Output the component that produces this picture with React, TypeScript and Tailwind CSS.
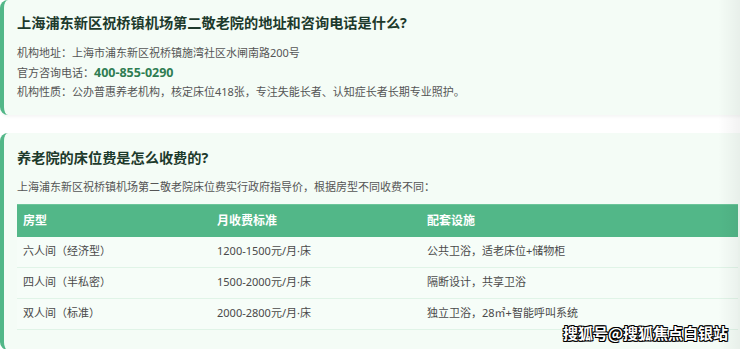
const rows = [
  { type: "六人间（经济型）", price: "1200-1500元/月·床", info: "公共卫浴，适老床位+储物柜" },
  { type: "四人间（半私密）", price: "1500-2000元/月·床", info: "隔断设计，共享卫浴" },
  { type: "双人间（标准）", price: "2000-2800元/月·床", info: "独立卫浴，28㎡+智能呼叫系统" },
];

const App = () => {
  return (
    <div className="relative w-[740px] h-[349px] overflow-hidden bg-white font-['Noto_Sans','Noto_Sans_CJK_SC',sans-serif]">
      <div className="flex flex-col gap-[18px] mr-[-20px]">
        <section className="rounded-lg border-l-4 border-[#52b788] bg-[#f4fcf6] pl-[13px] pr-[22px] pt-[13px] pb-[13px] shadow-[0_2px_3px_rgba(0,0,0,0.04)]">
          <h2 className="text-[14.2px] leading-[20px] font-bold text-[#1d3a2c] mb-[10px]">
            上海浦东新区祝桥镇机场第二敬老院的地址和咨询电话是什么?
          </h2>
          <div className="flex flex-col text-[11px] leading-[19.5px] text-[#555]">
            <p>机构地址：上海市浦东新区祝桥镇施湾社区水闸南路200号</p>
            <p className="h-[19.5px]">
              官方咨询电话：<span className="text-[12.5px] leading-[19.5px] font-bold text-[#2f7d52]">400-855-0290</span>
            </p>
            <p>机构性质：公办普惠养老机构，核定床位418张，专注失能长者、认知症长者长期专业照护。</p>
          </div>
        </section>

        <section className="rounded-lg border-l-4 border-[#52b788] bg-[#f4fcf6] pl-[13px] pr-[22px] pt-[15px] pb-[20px]">
          <h2 className="text-[14.2px] leading-[20px] font-bold text-[#1d3a2c] mb-[9px]">
            养老院的床位费是怎么收费的?
          </h2>
          <p className="text-[11px] leading-[20px] text-[#555] mb-[7px]">
            上海浦东新区祝桥镇机场第二敬老院床位费实行政府指导价，根据房型不同收费不同：
          </p>
          <div className="w-[721px] text-[11px]">
            <div className="grid grid-cols-[194px_210px_1fr] h-[33px] items-center bg-[#52b788] text-white font-bold text-[12px] border-t border-[#6cc59a]">
              <div className="px-[6px]">房型</div>
              <div className="px-[6px]">月收费标准</div>
              <div className="px-[6px]">配套设施</div>
            </div>
            {rows.map((r) => (
              <div
                key={r.type}
                className="grid grid-cols-[194px_210px_1fr] h-[31px] items-center border-b border-[#e0f4e7] bg-[#f6fdf8] text-[#4a4a4a]"
              >
                <div className="px-[6px]">{r.type}</div>
                <div className="px-[6px]">{r.price}</div>
                <div className="px-[6px]">{r.info}</div>
              </div>
            ))}
          </div>
        </section>
      </div>

      <div className="absolute top-0 right-0 h-full w-[22px] bg-gradient-to-r from-transparent to-black/[0.05] pointer-events-none" />

      <div className="absolute left-[563px] top-[323px] text-[15px] leading-[20px] font-bold text-white font-['Noto_Sans_CJK_SC',sans-serif] [text-shadow:1px_1px_0_#000,-1px_-1px_0_#000,1px_-1px_0_#000,-1px_1px_0_#000,0_1px_0_#000,0_-1px_0_#000]">
        搜狐号@搜狐焦点白银站
      </div>
    </div>
  );
};

export default App;
